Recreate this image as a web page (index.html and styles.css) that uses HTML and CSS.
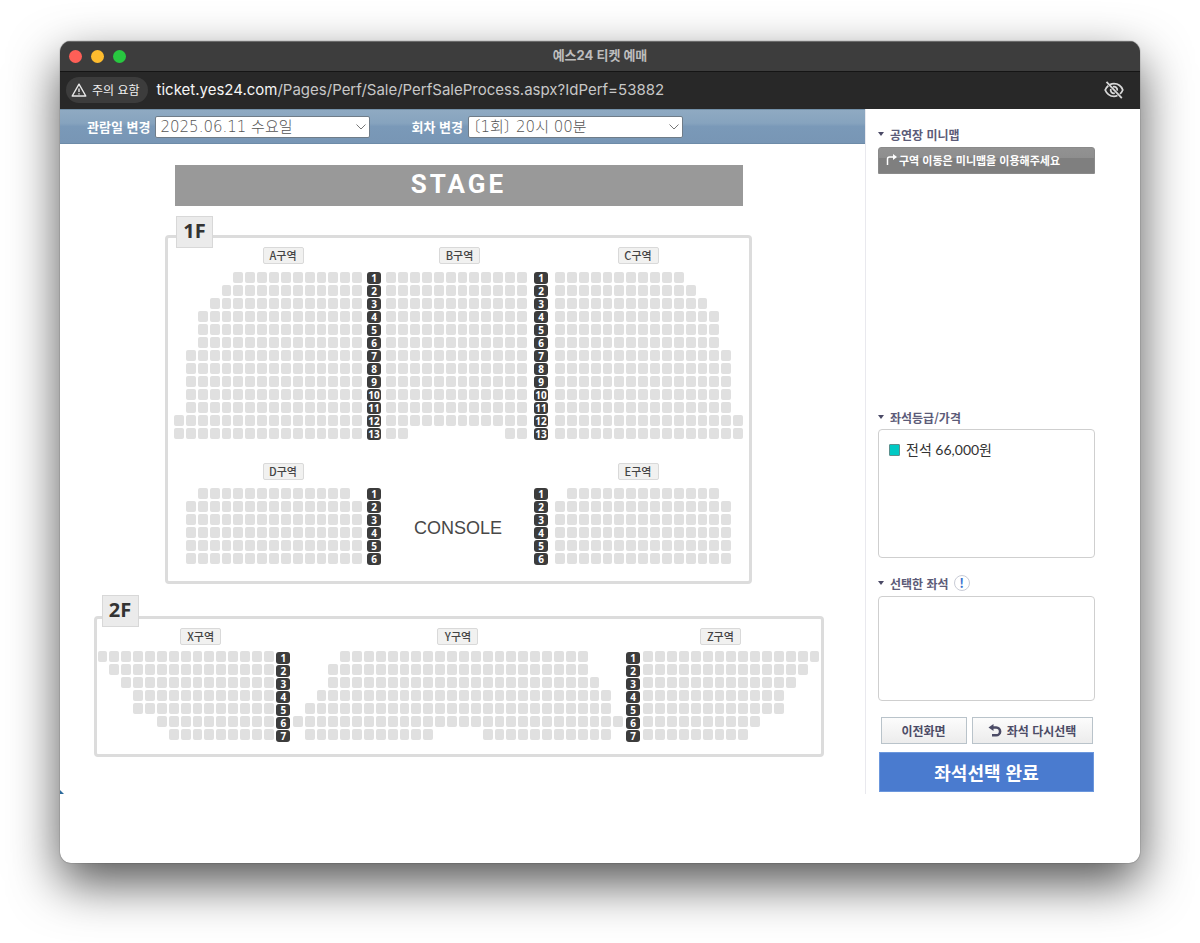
FILE: index.html
```html
<!DOCTYPE html>
<html lang="ko">
<head>
  <meta charset="UTF-8" />
  <meta name="viewport" content="width=device-width, initial-scale=1.0"/>
  <title>예스24 티켓 예매</title>
  <link rel="stylesheet" href="styles.css">
</head>
<body>
  <div class="window">

    <!-- Window chrome -->
    <header class="title-bar">
      <div class="lights">
        <span class="light red"></span>
        <span class="light yellow"></span>
        <span class="light green"></span>
      </div>
      <h1>예스24 티켓 예매</h1>
    </header>
    <div class="url-bar">
      <span class="chip">
        <svg width="16" height="14" viewBox="0 0 16 14" fill="none" stroke="#e8e8e8" stroke-width="1.4" stroke-linejoin="round">
          <path d="M8 1.2 14.8 13H1.2z"/>
          <path d="M8 5.4v3.6M8 10.2v1.4"/>
        </svg>
        주의 요함
      </span>
      <span class="url"><b>ticket.yes24.com</b>/Pages/Perf/Sale/PerfSaleProcess.aspx?IdPerf=53882</span>
      <svg class="eye" width="22" height="20" viewBox="0 0 22 20" fill="none" stroke="#d8d8d8" stroke-width="1.8">
        <path d="M7 4.6C8.2 4 9.6 3.7 11 3.7c4 0 7.2 2.4 8.8 6.3-.7 1.6-1.6 2.9-2.8 3.9M14.5 15.5c-1.1.5-2.300.8-3.500.8-4 0-7.200-2.400-8.800-6.300.7-1.700 1.800-3.100 3.100-4.200"/>
        <path d="M10 6.800c2.500-.6 4.600 1.300 4.200 3.800M7.800 9c-.7 2.600 1.300 4.700 4 4.200"/>
        <path d="M3.500 1.800 18.800 18.200"/>
      </svg>
    </div>

    <div class="content">
      <main class="map-area">
        <form class="date-bar">
          <label for="playDate">관람일 변경</label>
          <select id="playDate"><option>2025.06.11 수요일</option></select>
          <label for="playTime" class="time-label">회차 변경</label>
          <select id="playTime"><option>〔1회〕 20시 00분</option></select>
        </form>

        <div class="seat-map">
          <div class="stage">STAGE</div>

          <!-- 1F -->
          <section class="floor floor-1">
            <h2 class="floor-name">1F</h2>
            <div class="blocks">
              <div class="block left">
                <span class="block-name">A구역</span>
                <div class="seats cols-16" data-rows="6-16 5-16 4-16 3-16 3-16 3-16 2-16 2-16 2-16 2-16 2-16 1-16 1-16"></div>
              </div>
              <ol class="row-numbers">
                <li>1</li><li>2</li><li>3</li><li>4</li><li>5</li><li>6</li><li>7</li>
                <li>8</li><li>9</li><li>10</li><li>11</li><li>12</li><li>13</li>
              </ol>
              <div class="block middle">
                <span class="block-name">B구역</span>
                <div class="seats cols-12" data-rows="1-12 1-12 1-12 1-12 1-12 1-12 1-12 1-12 1-12 1-12 1-12 1-12 1-2,11-12"></div>
              </div>
              <ol class="row-numbers">
                <li>1</li><li>2</li><li>3</li><li>4</li><li>5</li><li>6</li><li>7</li>
                <li>8</li><li>9</li><li>10</li><li>11</li><li>12</li><li>13</li>
              </ol>
              <div class="block right">
                <span class="block-name">C구역</span>
                <div class="seats cols-16" data-rows="1-11 1-12 1-13 1-14 1-14 1-14 1-15 1-15 1-15 1-15 1-15 1-16 1-16"></div>
              </div>
            </div>
            <div class="blocks">
              <div class="block left">
                <span class="block-name">D구역</span>
                <div class="seats cols-16" data-rows="3-15 2-16 2-16 2-16 2-16 2-16"></div>
              </div>
              <ol class="row-numbers">
                <li>1</li><li>2</li><li>3</li><li>4</li><li>5</li><li>6</li>
              </ol>
              <div class="console">CONSOLE</div>
              <ol class="row-numbers">
                <li>1</li><li>2</li><li>3</li><li>4</li><li>5</li><li>6</li>
              </ol>
              <div class="block right">
                <span class="block-name">E구역</span>
                <div class="seats cols-16" data-rows="2-14 1-15 1-15 1-15 1-15 1-15"></div>
              </div>
            </div>
          </section>

          <!-- 2F -->
          <section class="floor floor-2">
            <h2 class="floor-name">2F</h2>
            <div class="blocks">
              <div class="block left">
                <span class="block-name">X구역</span>
                <div class="seats cols-15" data-rows="1-15 2-15 3-15 4-15 4-15 6-15 7-15"></div>
              </div>
              <ol class="row-numbers">
                <li>1</li><li>2</li><li>3</li><li>4</li><li>5</li><li>6</li><li>7</li>
              </ol>
              <div class="block">
                <span class="block-name">Y구역</span>
                <div class="seats cols-28" data-rows="5-25 4-25 4-26 3-27 2-27 1-28 2-12,17-27"></div>
              </div>
              <ol class="row-numbers">
                <li>1</li><li>2</li><li>3</li><li>4</li><li>5</li><li>6</li><li>7</li>
              </ol>
              <div class="block right">
                <span class="block-name">Z구역</span>
                <div class="seats cols-15" data-rows="1-15 1-14 1-13 1-12 1-12 1-10 1-9"></div>
              </div>
            </div>
          </section>
        </div>
      </main>

      <aside class="sidebar">
        <section class="minimap">
          <h3>공연장 미니맵</h3>
          <p class="minimap-tip">
            <svg width="11" height="12" viewBox="0 0 11 12" fill="none" stroke="#fff" stroke-width="1.5">
              <path d="M1.5 11V5q0-2 2-2H8"/>
              <path d="M7 0l4 3-4 3z" fill="#fff" stroke="none"/>
            </svg>
            구역 이동은 미니맵을 이용해주세요
          </p>
        </section>

        <section>
          <h3>좌석등급/가격</h3>
          <ul class="panel prices">
            <li><span class="swatch"></span>전석 66,000원</li>
          </ul>
        </section>

        <section class="selected">
          <h3>선택한 좌석 <span class="info">!</span></h3>
          <div class="panel picked"></div>
        </section>

        <div class="actions">
          <button type="button" class="button back">이전화면</button>
          <button type="button" class="button reset">
            <svg width="14" height="14" viewBox="0 0 14 14" fill="none" stroke="#4b4b66" stroke-width="2.6">
              <path d="M3 3.5h5.2a3.9 3.9 0 0 1 0 7.8H4"/>
              <path d="M5.5 0v7L.5 3.5z" fill="#4b4b66" stroke="none"/>
            </svg>
            좌석 다시선택
          </button>
          <button type="button" class="button submit">좌석선택 완료</button>
        </div>
      </aside>
    </div>
  </div>
  <script src="seats.js"></script>
</body>
</html>
```
FILE: styles.css
```css
:root {
  --ui-font: Inter, "Noto Sans CJK KR", sans-serif;
  --page-font: "Noto Sans CJK KR", sans-serif;
  --seat-color: #e0e0e0;
  --line-color: #dcdcdc;
  --heading-color: #5c5b78;
}

* {
  box-sizing: border-box;
}

body {
  margin: 0;
  min-height: 100vh;
  padding: 41px 60px 80px;
  display: flex;
  background: #fff;
  font-family: var(--page-font);
  font-size: 12px;
  color: #333;
}

h1, h2, h3, p, ul, ol {
  margin: 0;
  padding: 0;
}

ul, ol {
  list-style: none;
}

.window {
  flex: 1;
  display: flex;
  flex-direction: column;
  background: #fff;
  border-radius: 11px;
  overflow: hidden;
  box-shadow: 0 0 1px rgba(0, 0, 0, 0.8), 0 20px 50px rgba(0, 0, 0, 0.68);
}

/* Window chrome */
.title-bar {
  height: 31px;
  display: grid;
  grid-template-columns: 1fr auto 1fr;
  align-items: center;
  background: #3d3d3d;
  border-top: 1px solid #6a6a6a;
  border-bottom: 1px solid #151515;
}

.title-bar h1 {
  padding-bottom: 3px;
  font-family: var(--ui-font);
  font-size: 13px;
  line-height: 20px;
  font-weight: 700;
  color: #bdbdbd;
}

.lights {
  display: flex;
  gap: 9px;
  padding-left: 9px;
}

.light {
  width: 13px;
  height: 13px;
  border-radius: 50%;
}

.red { background: #ff5f57; }
.yellow { background: #febc2e; }
.green { background: #28c840; }

.url-bar {
  height: 37px;
  display: flex;
  align-items: center;
  padding: 0 15px 2px 6px;
  background: #282828;
  font-family: var(--ui-font);
}

.chip {
  height: 26px;
  display: flex;
  align-items: center;
  gap: 5px;
  padding: 0 8px 0 5px;
  margin-right: 9px;
  border-radius: 13px;
  background: #3c3c3c;
  color: #f0f0f0;
}

.url {
  flex: 1;
  font-size: 15px;
  color: #c7c7c7;
}

.url b {
  font-weight: 400;
  color: #f5f5f5;
}

.content {
  display: flex;
  padding-bottom: 69px;
}

/* Date and time bar */
.map-area {
  flex: 1;
  position: relative;
}

.map-area::after {
  content: "";
  position: absolute;
  left: 0;
  bottom: 0;
  border-left: 4px solid #2d6a9c;
  border-top: 4px solid transparent;
}

.date-bar {
  height: 35px;
  display: flex;
  align-items: center;
  padding-left: 27px;
  background: linear-gradient(#8faac2 0%, #86a3be 40%, #7a99b8 50%, #7896b5 100%);
  border-top: 1px solid #7390a8;
  border-bottom: 1px solid #6d8ba8;
}

.date-bar label {
  margin-right: 5px;
  font-size: 13px;
  font-weight: 700;
  color: #fff;
}

.date-bar .time-label {
  margin-left: 41px;
}

.date-bar select {
  width: 215px;
  height: 22px;
  padding: 0 4px;
  appearance: none;
  border: 1px solid #6f7c88;
  border-radius: 2px;
  background: #fff url("data:image/svg+xml,%3Csvg xmlns='http://www.w3.org/2000/svg' width='10' height='6' fill='none' stroke='%23777'%3E%3Cpath d='M.5.5 5 5 9.5.5'/%3E%3C/svg%3E") no-repeat right 3px center;
  font-family: "DejaVu Sans Light", "DejaVu Sans", "Noto Sans CJK KR", sans-serif;
  font-size: 15px;
  font-weight: 300;
  font-feature-settings: "halt";
  line-height: 18px;
  color: #555;
}

/* Seat map */
.seat-map {
  display: flex;
  flex-direction: column;
  align-items: center;
  padding: 21px 8px 36px 0;
}

.stage {
  width: 100%;
  max-width: 568px;
  height: 41px;
  background: #999;
  color: #fff;
  font-family: Roboto, sans-serif;
  font-size: 26px;
  font-weight: 700;
  line-height: 38px;
  letter-spacing: 3px;
  text-align: center;
}

.floor {
  position: relative;
  width: 100%;
  border: 3px solid var(--line-color);
  border-radius: 4px;
}

.floor-1 {
  max-width: 587px;
  margin-top: 29px;
  padding: 9px 6px 16px;
}

.floor-2 {
  max-width: 730px;
  margin-top: 32px;
  padding: 9px 1px 12px;
}

.floor-name {
  position: absolute;
  top: -22px;
  left: 8px;
  width: 37px;
  height: 32px;
  border: 1px solid #d8d8d8;
  background: #ebebeb;
  font-family: "Noto Sans", sans-serif;
  font-size: 20px;
  line-height: 28px;
  text-align: center;
}

.floor-2 .floor-name {
  top: -24px;
  left: 5px;
}

.blocks {
  display: grid;
  grid-template-columns: 188fr 24fr 141fr 28fr 188fr;
}

.blocks + .blocks {
  margin-top: 23px;
}

.floor-2 .blocks {
  grid-template-columns: 176fr 19fr 330fr 20fr 176fr;
}

.block {
  display: flex;
  flex-direction: column;
}

.block-name {
  align-self: center;
  width: 41px;
  height: 17px;
  margin-bottom: 8px;
  border: 1px solid #d9d9d9;
  border-radius: 2px;
  background: #f1f1f0;
  font-size: 11px;
  font-weight: 500;
  line-height: 15px;
  text-align: center;
  color: #444;
}

.left .block-name {
  margin-left: 30px;
}

.middle .block-name {
  margin-left: 6px;
}

.right .block-name {
  margin-right: 22px;
}

.floor-2 .block-name {
  margin-bottom: 6px;
}

.seats {
  display: grid;
  grid-auto-rows: 11px;
  gap: 2px;
}

.cols-12 { grid-template-columns: repeat(12, 1fr); }
.cols-15 { grid-template-columns: repeat(15, 1fr); }
.cols-16 { grid-template-columns: repeat(16, 1fr); }
.cols-28 { grid-template-columns: repeat(28, 1fr); }

.seat {
  border-radius: 2px;
  background: var(--seat-color);
}

.row-numbers {
  display: flex;
  flex-direction: column;
  align-items: center;
  gap: 1px;
  padding-top: 25px;
}

.floor-2 .row-numbers {
  padding-top: 24px;
}

.row-numbers li {
  min-width: 14px;
  height: 12px;
  padding: 0 1px;
  border-radius: 3px;
  background: #3c3c3c;
  color: #fff;
  font-family: "Noto Sans", sans-serif;
  font-size: 10px;
  font-weight: 700;
  line-height: 12px;
  text-align: center;
}

.console {
  align-self: center;
  padding: 28px 0 0 3px;
  font-family: "Liberation Sans", sans-serif;
  font-size: 18px;
  line-height: 24px;
  text-align: center;
  color: #484848;
}

/* Sidebar */
.sidebar {
  width: 275px;
  padding: 15px 45px 2px 12px;
  border-left: 1px solid #e9e9ee;
}

.sidebar h3 {
  display: flex;
  align-items: center;
  height: 20px;
  font-size: 12px;
  font-weight: 700;
  color: var(--heading-color);
}

.sidebar h3::before {
  content: "";
  margin-right: 6px;
  border: 3px solid transparent;
  border-top: 4px solid #4b4a66;
  border-bottom: 0;
}

.minimap {
  height: 283px;
}

.minimap-tip {
  height: 27px;
  display: flex;
  align-items: center;
  gap: 2px;
  margin-top: 3px;
  padding: 0 0 2px 7px;
  border: 1px solid #8a8a8a;
  border-radius: 3px 3px 0 0;
  background: linear-gradient(#929292 0%, #8e8e8e 38%, #7f7f7f 40%, #7f7f7f 100%);
  font-weight: 700;
  font-size: 11px;
  color: #fff;
}

.panel {
  border: 1px solid #cfcfcf;
  border-radius: 4px;
}

.prices {
  height: 129px;
  margin-top: 2px;
  padding: 10px;
}

.prices li {
  display: flex;
  align-items: center;
  gap: 6px;
  font-family: Lato, "Noto Sans CJK KR", sans-serif;
  font-size: 14px;
  line-height: 20px;
}

.swatch {
  width: 11px;
  height: 12px;
  border: 1px solid #5d8f8d;
  border-radius: 1px;
  background: #00c9c4;
}

.selected {
  margin-top: 15px;
}

.info {
  width: 16px;
  height: 16px;
  margin-left: 5px;
  border: 1px solid #c9ccd6;
  border-radius: 50%;
  font-size: 13px;
  line-height: 14px;
  text-align: center;
  color: #3a73d0;
}

.picked {
  height: 105px;
  margin-top: 3px;
}

.actions {
  display: flex;
  flex-wrap: wrap;
  justify-content: center;
  gap: 8px 5px;
  padding: 16px 1px 0;
}

.button {
  height: 27px;
  display: flex;
  align-items: center;
  justify-content: center;
  gap: 5px;
  padding: 0;
  border: 1px solid #b9c3ca;
  border-radius: 0;
  background: linear-gradient(#fcfcfc, #ececec);
  font-family: var(--page-font);
  font-size: 12px;
  font-weight: 700;
  color: #4b4b66;
  cursor: pointer;
}

.back {
  width: 86px;
}

.reset {
  width: 121px;
}

.submit {
  width: 100%;
  height: 40px;
  border-color: #6b97dd;
  background: #4a7bcf;
  font-size: 18px;
  color: #fff;
}
```
FILE: seats.js
```js
// data-rows: one entry per row, each a comma separated list of seat column ranges
document.querySelectorAll('.seats').forEach(function (block) {
  block.dataset.rows.split(' ').forEach(function (row, i) {
    row.split(',').forEach(function (range) {
      var ends = range.split('-').map(Number);
      for (var col = ends[0]; col <= ends[1]; col++) {
        var seat = document.createElement('span');
        seat.className = 'seat';
        seat.style.gridArea = (i + 1) + ' / ' + col;
        block.appendChild(seat);
      }
    });
  });
});
```
